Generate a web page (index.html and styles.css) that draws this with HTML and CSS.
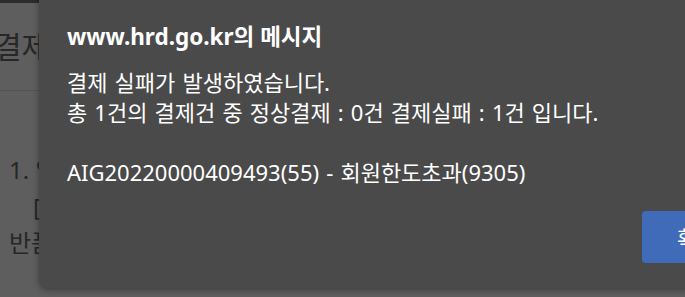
FILE: index.html
```html
<!DOCTYPE html>
<html lang="ko">
<head>
    <meta charset="UTF-8">
    <title>www.hrd.go.kr의 메시지</title>
    <link rel="stylesheet" href="styles.css">
</head>
<body>

<div class="page">
    <div class="top-bar"></div>
    <h2 class="page-title">결제</h2>
    <div class="divider"></div>
    <p class="step">1. 약</p>
    <p class="bracket">[</p>
    <p class="note">반품</p>
</div>

<div class="dialog">
    <h1 class="dialog-title">www.hrd.go.kr의 메시지</h1>
    <div class="dialog-body">
        <p>결제 실패가 발생하였습니다.</p>
        <p>총 1건의 결제건 중 정상결제 : 0건 결제실패 : 1건 입니다.</p>
        <p>&nbsp;</p>
        <p>AIG20220000409493(55) - 회원한도초과(9305)</p>
    </div>
    <div class="dialog-buttons">
        <button class="btn-ok">확인</button>
    </div>
</div>

</body>
</html>
```

FILE: styles.css
```css
body {
    margin: 0;
    width: 685px;
    height: 297px;
    overflow: hidden;
    background: #5e5e5e;
    font-family: "Noto Sans", "Noto Sans CJK KR", sans-serif;
    position: relative;
}
.page {
    color: #272727;
}
.top-bar {
    height: 3px;
    width: 40px;
    background: #2c2c2c;
}
.page-title {
    margin: 24px 0 0 -6px;
    font-size: 30px;
    font-weight: normal;
    line-height: 40px;
}
.divider {
    margin-top: 23px;
    height: 1px;
    background: #535353;
}
.step {
    margin: 64px 0 0 9px;
    font-size: 24px;
    line-height: 30px;
}
.bracket {
    margin: 7px 0 0 33px;
    font-size: 24px;
    line-height: 30px;
}
.note {
    margin: 6px 0 0 9px;
    font-size: 24px;
    line-height: 30px;
}
.dialog {
    position: absolute;
    left: 39px;
    top: -10px;
    width: 700px;
    height: 298px;
    background: #4a4a4a;
    border-radius: 8px;
    box-shadow: 0 2px 6px rgba(0, 0, 0, 0.35);
    padding: 32px 0 0 28px;
    box-sizing: border-box;
    color: #ffffff;
}
.dialog-title {
    margin: 0;
    font-size: 22.5px;
    font-weight: bold;
    line-height: 30px;
}
.dialog-body {
    margin-top: 15px;
    font-size: 22px;
    line-height: 30px;
    word-spacing: 1.4px;
}
.dialog-body p {
    margin: 0;
}
.dialog-buttons {
    margin-top: 24px;
    padding-left: 575px;
}
.btn-ok {
    width: 90px;
    height: 52px;
    background: #3f6bb9;
    color: #ffffff;
    border: none;
    border-radius: 4px;
    font-family: inherit;
    font-size: 22px;
    text-align: left;
    padding-left: 35px;
}
```
